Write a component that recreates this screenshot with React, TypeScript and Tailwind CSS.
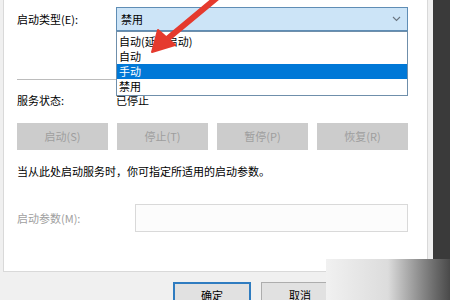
const font = { fontFamily: '"Noto Sans CJK SC", "Noto Sans", sans-serif' };

const actions = ["启动(S)", "停止(T)", "暂停(P)", "恢复(R)"];
const options = ["自动(延迟启动)", "自动", "手动", "禁用"];

export default function App() {
  return (
    <div
      className="relative w-[450px] h-[300px] overflow-hidden flex bg-[#3e3e3e] text-[11px] text-black"
      style={font}
    >
      {/* 服务属性对话框 */}
      <div className="w-[433px] h-full flex flex-col bg-[#f0f0f0]">
        <div className="ml-[3px] w-[425px] h-[272px] shrink-0 bg-white border-l border-r border-b border-[#d9d9d9] pl-[13px] pr-[19px] pt-[7px] relative">
          <div className="flex items-center h-[24px]">
            <span className="w-[99px] leading-none">启动类型(E):</span>
            <div className="flex-1 h-full flex items-center justify-between pl-[4px] pr-[6px] bg-[#cce4f7] border border-[#5f8db5]">
              <span className="leading-none">禁用</span>
              <svg width="9" height="6" viewBox="0 0 9 6" className="text-[#6a7580]">
                <path d="M1 1 L4.5 4.5 L8 1" fill="none" stroke="currentColor" strokeWidth="1.1" />
              </svg>
            </div>
          </div>

          <div className="mt-[48px] border-t border-[#bcbcbc]" />

          <div className="flex items-center h-[14px] mt-[13px]">
            <span className="w-[99px] leading-none">服务状态:</span>
            <span className="leading-none">已停止</span>
          </div>

          <div className="flex gap-[9px] mt-[16px]">
            {actions.map((a) => (
              <div
                key={a}
                className="w-[91px] h-[27px] flex items-center justify-center bg-[#cccccc] text-[#9e9e9e] leading-none"
              >
                {a}
              </div>
            ))}
          </div>

          <div className="mt-[16px] leading-none">当从此处启动服务时，你可指定所适用的启动参数。</div>

          <div className="flex items-center mt-[27px]">
            <span className="w-[118px] text-[#a0a0a0] leading-none">启动参数(M):</span>
            <div className="flex-1 h-[28px] border border-[#d9d9d9] bg-[#fcfcfc]" />
          </div>

          {/* 展开的下拉列表 */}
          <div className="absolute left-[112px] top-[31px] w-[292px] h-[65px] bg-white border border-[#6f8fab] pt-[2px]">
            {options.map((o) => (
              <div
                key={o}
                className={
                  o === "手动"
                    ? "h-[15px] flex items-center pl-[2px] bg-[#0078d7] text-white leading-none"
                    : "h-[15px] flex items-center pl-[2px] leading-none"
                }
              >
                {o}
              </div>
            ))}
          </div>
        </div>

        <div className="flex gap-[10px] pl-[173px] pt-[10px]">
          <div className="w-[78px] h-[26px] shrink-0 flex items-center justify-center bg-[#e1e1e1] border-2 border-[#2f7cc0] leading-none">
            确定
          </div>
          <div className="w-[78px] h-[26px] shrink-0 flex items-center justify-center bg-[#e1e1e1] border border-[#adadad] leading-none">
            取消
          </div>
        </div>
      </div>

      <div className="flex-1 h-full bg-[#3a3a3a]" />

      {/* 红色箭头 */}
      <svg className="absolute left-0 top-0" width="450" height="300" viewBox="0 0 450 300">
        <path d="M219 -4 L166 40" stroke="#e53a2e" strokeWidth="6" strokeLinecap="round" />
        <path d="M152 52 L158 30 L175 45 Z" fill="#e53a2e" stroke="#e53a2e" strokeWidth="2" strokeLinejoin="round" />
      </svg>

      {/* 右下角水印 */}
      <div className="absolute left-[326px] top-[259px] w-[124px] h-[41px] bg-gradient-to-r from-[#f1f1f1] via-[#dcdcdc] to-[#4a4a4a]" />
    </div>
  );
}
